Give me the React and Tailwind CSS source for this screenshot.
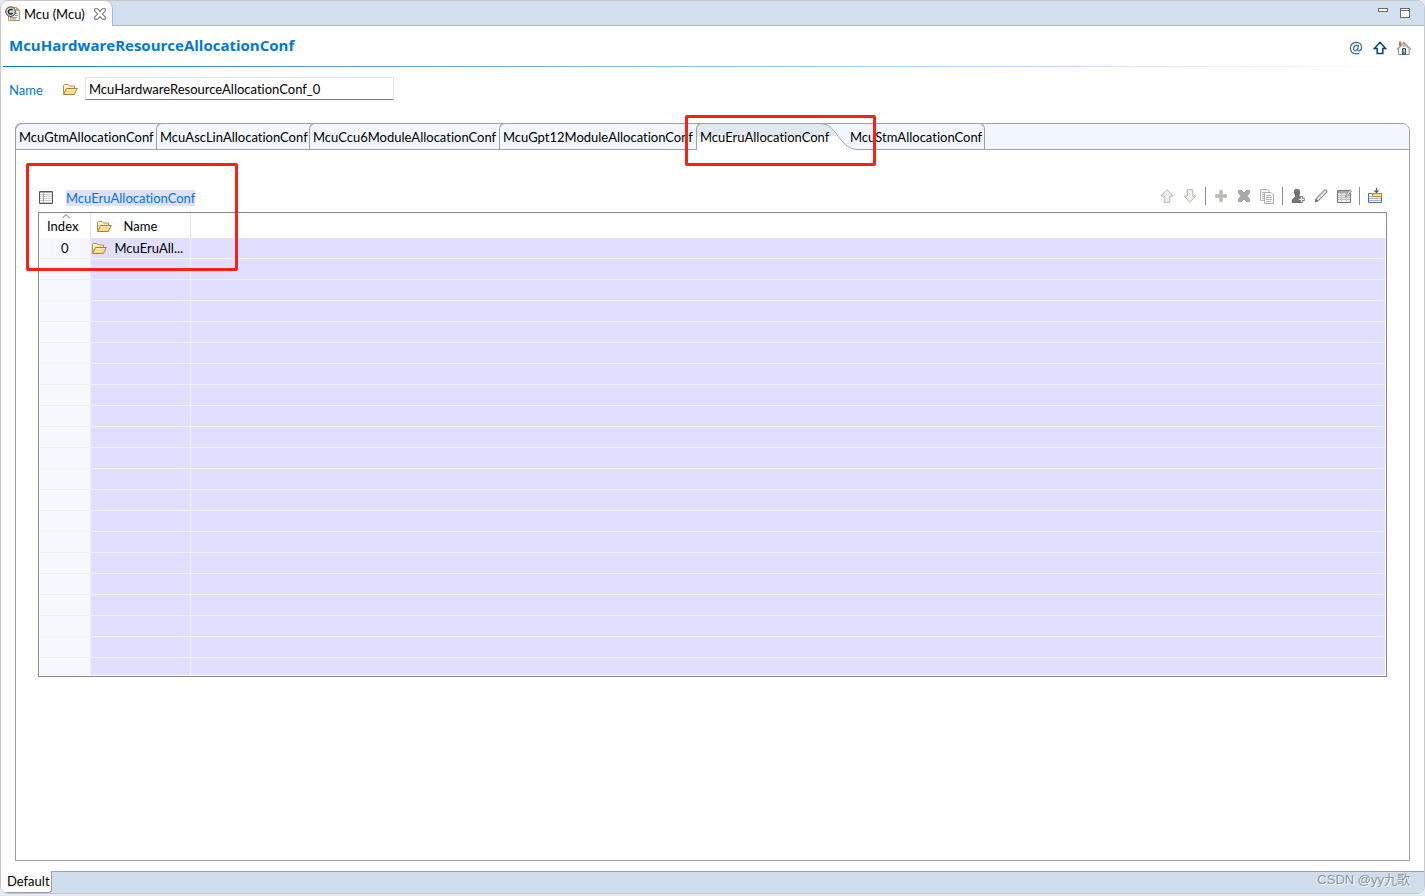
import clsx from 'clsx'

const TABS = [
  { label: 'McuGtmAllocationConf', width: 'w-[141px]' },
  { label: 'McuAscLinAllocationConf', width: 'w-[153px]' },
  { label: 'McuCcu6ModuleAllocationConf', width: 'w-[190px]' },
  { label: 'McuGpt12ModuleAllocationConf', width: 'w-[197px]' },
  { label: 'McuEruAllocationConf', width: 'w-[124px]', active: true },
  { label: 'McuStmAllocationConf', width: 'w-[139px]' },
]

const ROWS = [{ index: 0, name: 'McuEruAll...' }]
const EMPTY_ROWS = 19

function Icon({ children, className = 'size-4' }) {
  return (
    <svg viewBox="0 0 16 16" className={clsx('block shrink-0', className)} fill="none" aria-hidden="true">
      {children}
    </svg>
  )
}

function FolderIcon() {
  return (
    <Icon>
      <path d="M1.5 12.5V4.5L2.5 3.5H6L7.5 5H12.5V7.5" fill="#fff3c4" stroke="#b88a45" />
      <path d="M1.5 13.5L4.5 7.5H15.3L12.3 13.5Z" fill="#fbdc8c" stroke="#b07c35" />
      <path d="M5 8.5H13.7" stroke="#fff0bd" />
    </Icon>
  )
}

function FileIcon() {
  return (
    <Icon>
      <path d="M4.5 1.5H11.5L14.5 4.5V14.5H3.5V2Z" fill="#eef4fc" stroke="#b59a5b" />
      <path d="M11.5 1.5V4.5H14.5Z" fill="#e8c27a" stroke="#b59a5b" />
      <path d="M10 7.5H13M10 9.5H13M5 11.5H12M5 13H11" stroke="#7c9fd0" />
      <circle cx="5.6" cy="5.6" r="4.8" fill="#d9d9d9" stroke="#333" />
      <path d="M7.6 4.3A2.3 2.3 0 1 0 7.6 7" stroke="#222" strokeWidth="1.4" />
    </Icon>
  )
}

function CloseIcon() {
  return (
    <Icon className="size-3">
      <path d="M1 1H4.8L8 4.6L11.2 1H15V4.2L11.2 8L15 11.8V15H11.2L8 11.4L4.8 15H1V11.8L4.8 8L1 4.2Z" stroke="#707070" strokeWidth="1.4" />
    </Icon>
  )
}

function GridIcon() {
  return (
    <Icon>
      <path d="M1.5 1.5H14.5V13.5H1.5Z" fill="#fff" stroke="#555" />
      <path d="M2 2.5H14" stroke="#aaa" />
      <path d="M2 4.5H14M2 6.5H14M2 8.5H14M2 10.5H14M2 12.5H14" stroke="#c9c9c9" />
      <path d="M5.5 2V13" stroke="#aaa" />
    </Icon>
  )
}

const HEADER_ACTIONS = [
  {
    label: 'Annotations',
    icon: (
      <Icon>
        <path d="M10.6 5L9.7 9.3Q9.5 11 11 11Q13.6 10.4 13.6 7.2Q13.2 2.5 8.3 2.4Q2.6 2.8 2.4 8.2Q2.6 13.5 8 13.8Q10 13.8 11.5 13" stroke="#3c7295" strokeWidth="1.2" />
        <path d="M10 6.4Q9.5 5.1 8.2 5.2Q5.6 6 5.6 9Q5.8 10.9 7.4 10.8Q9 10.4 9.8 8.4" stroke="#3c7295" strokeWidth="1.2" />
      </Icon>
    ),
  },
  {
    label: 'Up one level',
    icon: (
      <Icon>
        <path d="M8 2.3L13.6 8.5H10.8V13.5H5.2V8.5H2.4Z" fill="#fff" stroke="#00408a" strokeWidth="1.5" />
      </Icon>
    ),
  },
  {
    label: 'Home',
    icon: (
      <Icon>
        <path d="M3 1.5H5V6H3Z" fill="#b97c55" />
        <path d="M2.5 8.5L7.8 3.5L13.2 8.5V14.5H2.5Z" fill="#f6f8fb" stroke="#8292a8" />
        <path d="M1.3 9.2L7.8 2.4L14.8 9.2" stroke="#b98a5e" strokeWidth="1.6" strokeDasharray="1.5 .5" />
        <path d="M6.5 8.5H9.5V14.5H6.5Z" fill="#5d937f" stroke="#345b7d" />
        <path d="M7.5 9.5H9V12H7.5Z" fill="#e8dd45" />
        <path d="M7 5.5H9V6.5H7Z" fill="#568ac0" />
      </Icon>
    ),
  },
]

const TOOLBAR = [
  [
    {
      label: 'Move up',
      icon: (
        <Icon>
          <path d="M8 1.7L13.8 8H10.8V14.3H5.2V8H2.2Z" fill="#efefeb" stroke="#b5b5ae" />
        </Icon>
      ),
    },
    {
      label: 'Move down',
      icon: (
        <Icon>
          <path d="M8 14.3L13.8 8H10.8V1.7H5.2V8H2.2Z" fill="#efefeb" stroke="#b5b5ae" />
        </Icon>
      ),
    },
  ],
  [
    {
      label: 'Add',
      icon: (
        <Icon>
          <path d="M6.5 2.5H9.5V6.5H13.5V9.5H9.5V13.5H6.5V9.5H2.5V6.5H6.5Z" fill="#b9bbb2" stroke="#c5c6c0" />
        </Icon>
      ),
    },
    {
      label: 'Delete',
      icon: (
        <Icon>
          <path d="M2.5 2.5H5.5L8 5L10.5 2.5H13.5V5L10.8 8L13.5 11V13.5H10.5L8 11L5.5 13.5H2.5V11L5.2 8L2.5 5Z" fill="#aaa" stroke="#a2a2a2" />
        </Icon>
      ),
    },
    {
      label: 'Copy',
      icon: (
        <Icon>
          <path d="M1.5 1.5H8.5L10.5 3.5V12.5H1.5Z" fill="#f5f5f5" stroke="#b6b6b6" />
          <path d="M5.5 4.5H12L14.5 7V15.5H5.5Z" fill="#fafafa" stroke="#aaa" />
          <path d="M3 4.5H5M3 6.5H5M3 8.5H5M3 10.5H5M7 7.5H12M7 9.5H13M7 11.5H13M7 13.5H12" stroke="#b5b5b5" />
        </Icon>
      ),
    },
  ],
  [
    {
      label: 'Add user defined',
      icon: (
        <Icon>
          <circle cx="7" cy="4" r="3.2" fill="#747474" />
          <path d="M5.5 6H9L9 8.5L12 11V14.5H2.3V12L5.5 8.5Z" fill="#777" stroke="#666" />
          <path d="M6 3.5L7 2.5" stroke="#bbb" />
          <path d="M11.5 8V14.5M8.3 11.3H14.7" stroke="#777" strokeWidth="3.2" />
          <path d="M11.5 8.5V14M9 11.3H14" stroke="#eee" strokeWidth="1.2" />
        </Icon>
      ),
    },
    {
      label: 'Edit',
      icon: (
        <Icon>
          <path d="M2.3 13.7L3 10.8L11 2.3Q13 1 14 2.7Q14.2 3.8 13.2 5L5.3 12.8Z" fill="#ddd" stroke="#777" />
          <path d="M2 14.3L5 12.8L3.2 11Z" fill="#666" />
        </Icon>
      ),
    },
    {
      label: 'Edit table',
      icon: (
        <Icon>
          <path d="M1.5 2.5H14.5V14.5H1.5Z" fill="#f4f2f5" stroke="#79747c" />
          <path d="M2 3H14V5.5H2Z" fill="#aaa4ac" />
          <path d="M2 7.5H14M2 9.5H14M2 11.5H14" stroke="#bbb7be" />
          <path d="M5.5 5V14M10.5 5V14" stroke="#c8c4cc" />
          <path d="M9.5 9L10.3 6.3L14 1.5L15.5 3L11.8 8Z" fill="#ddd6c9" stroke="#98928a" />
        </Icon>
      ),
    },
  ],
  [
    {
      label: 'Insert row',
      icon: (
        <Icon>
          <path d="M1.5 5.5H14.5V14.5H1.5Z" fill="#fff" stroke="#4b6d96" />
          <path d="M1 5.5H15" stroke="#6d87aa" />
          <path d="M2 8.5H5M2 10.5H14M2 12.5H14" stroke="#9db4d5" />
          <path d="M5.5 5.5H14.5V8.5H5.5Z" fill="#ffe7a0" stroke="#c78512" />
          <path d="M9.5 0V4M7.5 2.5L9.5 4.5L11.5 2.5" stroke="#41616f" strokeWidth="1.2" />
        </Icon>
      ),
    },
  ],
]

function IconButton({ label, icon }) {
  return (
    <button type="button" aria-label={label} title={label}>
      {icon}
    </button>
  )
}

function Tab({ label, width, active, last }) {
  return (
    <button
      type="button"
      role="tab"
      aria-selected={!!active}
      className={clsx(
        'relative -mt-px shrink-0 border-t border-l border-[#a0a0a0] pl-[3px] text-left whitespace-nowrap',
        width,
        active
          ? 'z-10 mr-[26px] h-[27px] rounded-tl-md bg-linear-to-b from-[#e1e8f0] from-50% to-white to-50%'
          : 'h-[26px]',
        !active && !last && 'rounded-tl-md first:-ml-px',
        last && 'rounded-tr-md border-r border-l-transparent'
      )}
    >
      {active && (
        <svg className="absolute -top-px left-full h-[27px] w-[38px]" viewBox="0 0 38 27" fill="none" aria-hidden="true">
          <path d="M0 .5C18 .5 18 26 38 26.5V27H0Z" fill="#fff" />
          <path d="M0 .5C9 .5 13 7 17 13H0Z" fill="#e1e8f0" />
          <path d="M0 .5C18 .5 18 26 38 26.5" stroke="#a0a0a0" />
        </svg>
      )}
      <span className="relative">{label}</span>
    </button>
  )
}

function EditorTabBar() {
  return (
    <div className="flex h-[25px] items-start justify-between border-b border-[#a9b9cf] bg-[#d1dfee]">
      <div className="flex h-[25px] items-center rounded-tr-lg border-r border-[#a9b9cf] bg-white pr-1.5 pl-1">
        <FileIcon />
        <span className="ml-[3px] w-[70px] whitespace-nowrap">Mcu (Mcu)</span>
        <button type="button" aria-label="Close">
          <CloseIcon />
        </button>
      </div>
      <div className="flex gap-3 pt-[7px] pr-3.5">
        <button type="button" aria-label="Minimize" className="h-1 w-2.5 border border-[#6b6b6b] bg-white" />
        <button type="button" aria-label="Maximize" className="flex h-2.5 w-2.5 flex-col border border-[#6b6b6b] bg-white pt-px">
          <span className="h-px w-full bg-[#6b6b6b]" />
        </button>
      </div>
    </div>
  )
}

function AllocationTable() {
  return (
    <div className="border border-[#828790] p-px pt-0">
      <table className="w-full table-fixed border-collapse">
        <colgroup>
          <col className="w-[50px]" />
          <col className="w-[100px]" />
          <col />
        </colgroup>
        <thead>
          <tr className="h-[25px]">
            <th className="relative border-r border-[#e5e5e5] p-0 pr-1 font-normal">
              <svg className="absolute top-0 left-[22px] h-1.5 w-2" viewBox="0 0 8 6" fill="none" aria-hidden="true">
                <path d="M.5 5L4 1.5L7.5 5" stroke="#666" />
              </svg>
              Index
            </th>
            <th className="border-r border-[#e5e5e5] p-0 font-normal">
              <div className="flex items-center gap-3 pl-[5px]">
                <FolderIcon />
                Name
              </div>
            </th>
            <th className="p-0" />
          </tr>
        </thead>
        <tbody>
          {ROWS.map(row => (
            <tr key={row.index} className="h-5 border-b border-[#f0f0f0] leading-[18px]">
              <td className="border-r border-[#f0f0f0] bg-[#f7f7ff] p-0 text-center">{row.index}</td>
              <td className="border-r border-[#f0f0f0] bg-[#e0dfff] p-0">
                <div className="flex items-center gap-2 whitespace-nowrap">
                  <FolderIcon />
                  {row.name}
                </div>
              </td>
              <td className="bg-[#e0dfff] p-0" />
            </tr>
          ))}
          {Array.from({ length: EMPTY_ROWS }, (_, i) => (
            <tr key={i} className="h-[21px] border-b border-[#f0f0f0]">
              <td className="border-r border-[#f0f0f0] bg-[#f7f7ff] p-0" />
              <td className="border-r border-[#f0f0f0] bg-[#e0dfff] p-0" />
              <td className="bg-[#e0dfff] p-0" />
            </tr>
          ))}
          {/* last row is cut off by the table's bottom edge */}
          <tr className="h-[18px]">
            <td className="border-r border-[#f0f0f0] bg-[#f7f7ff] p-0" />
            <td className="border-r border-[#f0f0f0] bg-[#e0dfff] p-0" />
            <td className="bg-[#e0dfff] p-0" />
          </tr>
        </tbody>
      </table>
    </div>
  )
}

export default function App() {
  return (
    <div className="min-h-screen bg-[#e4ebf7] pb-0.5 font-['Lato','Noto_Sans_CJK_SC',sans-serif] text-[13px] leading-5 text-black [font-variant-ligatures:none]">
      <div className="flex min-h-[calc(100vh-2px)] flex-col overflow-hidden rounded-lg border border-[#c8c8c8] bg-white">
        <EditorTabBar />

        <header className="pr-4 pl-0.5">
          <div className="flex h-10 items-center justify-between pl-1.5">
            <h1 className="pb-0.5 font-['Open_Sans',sans-serif] text-[15px] font-bold text-[#0078d7]">McuHardwareResourceAllocationConf</h1>
            <div className="-mr-1 flex gap-2 pt-1">
              {HEADER_ACTIONS.map(a => <IconButton key={a.label} {...a} />)}
            </div>
          </div>
          <div className="h-px bg-linear-to-r from-[#0078d7] to-white" />
        </header>

        <div className="flex items-center px-2 pt-2.5">
          <label htmlFor="conf-name" className="w-[53px] pt-0.5 text-[#0078d7]">Name</label>
          <FolderIcon />
          <input
            id="conf-name"
            defaultValue="McuHardwareResourceAllocationConf_0"
            className="ml-[7px] h-[23px] w-[309px] border border-[#e5e5e5] border-b-[#808080] px-[3px] outline-none"
          />
        </div>

        <main className="mx-3.5 mt-[23px] mb-2.5 flex flex-1 flex-col rounded-t-lg border border-[#a0a0a0]">
          <div role="tablist" className="flex h-[26px] rounded-t-lg border-b border-[#a0a0a0] bg-[#f2f7ff]">
            {TABS.map((t, i) => {
              const tab = <Tab key={t.label} {...t} last={i === TABS.length - 1} />
              if (!t.active) return tab
              return (
                <div key={t.label} className="relative">
                  <div className="flex">{tab}</div>
                  <div className="pointer-events-none absolute -top-[9px] -left-[11px] z-20 h-[51px] w-[191px] rounded-xs border-3 border-[#ff1e14]" />
                </div>
              )
            })}
          </div>

          <section className="relative px-[22px] pt-[37px]">
            <div className="flex h-[25px] items-start justify-between">
              <div className="flex items-center gap-3 pt-[3px]">
                <GridIcon />
                <h2 className="bg-[#e0dfff] leading-4 text-[#0078d7]">McuEruAllocationConf</h2>
              </div>
              <div className="flex gap-[7px] pr-1">
                {TOOLBAR.map((group, i) => (
                  <div key={i} className={clsx('flex h-[18px] gap-[7px]', i > 0 && 'border-l border-[#8c8c8c] pl-[7px]')}>
                    {group.map(item => <IconButton key={item.label} {...item} />)}
                  </div>
                ))}
              </div>
            </div>
            <AllocationTable />
            <div className="pointer-events-none absolute top-[13px] left-2.5 h-[108px] w-[212px] rounded-xs border-3 border-[#ff1e14]" />
          </section>
        </main>

        <footer className="flex h-[22px] bg-[#cfddec]">
          <div className="w-[51px] rounded-br-sm border-r border-b border-[#a0a0a0] bg-white pl-1.5 leading-5">Default</div>
          <div className="flex-1 border-t border-[#a0a0a0] pr-3.5 text-right font-['Liberation_Sans','Noto_Sans_CJK_SC',sans-serif] text-[13px] leading-4 text-[#8c959f] text-shadow-[1px_1px_0_#fff]">
            CSDN @yy九歌
          </div>
        </footer>
      </div>
    </div>
  )
}
